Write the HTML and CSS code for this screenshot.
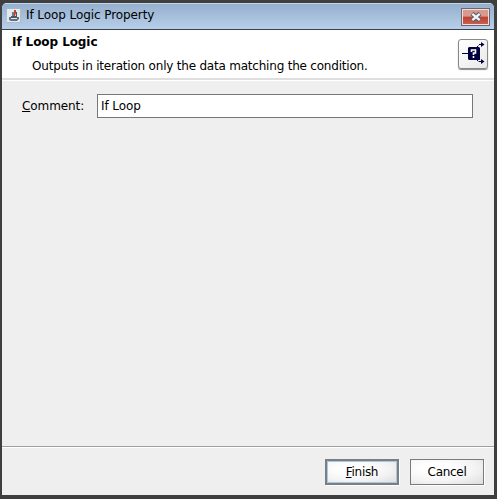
FILE: index.html
```
<!DOCTYPE html>
<html lang="en">

<head>
    <meta charset="UTF-8">
    <meta name="viewport" content="width=device-width, initial-scale=1.0">
    <title>If Loop Logic Property</title>
    <link rel="stylesheet" href="styles.css">
</head>

<body>
    <div class="window">
        <div class="titlebar">
            <svg class="app-icon" width="14" height="14" viewBox="0 0 14 14">
                <rect x="0" y="0" width="14" height="14" fill="#e6e8ea"/>
                <path d="M0 13.5h14M13.5 0v14" stroke="#b4bac2" fill="none"/>
                <path d="M5 3h2v4H5z" fill="#6d7f92"/>
                <path d="M7 1h2v3l-1 3H7z" fill="#c8402f"/>
                <path d="M9 3h1v4H9zM4 7h6v2H4z" fill="#4a5764"/>
                <path d="M2 8h2v2h6V8h2v2l-2 2H4l-2-1z" fill="#5d7186"/>
            </svg>
            <span class="title">If Loop Logic Property</span>
            <button class="close" aria-label="Close">
                <svg width="14" height="12" viewBox="0 0 14 12">
                    <path d="M3 2.5l8 7M11 2.5l-8 7" stroke="#59606b" stroke-width="4.4"/>
                    <path d="M3.3 2.8l7.4 6.4M10.7 2.8l-7.4 6.4" stroke="#f4f4f4" stroke-width="2.4"/>
                </svg>
            </button>
        </div>
        <div class="header">
            <div class="header-text">
                <h1>If Loop Logic</h1>
                <p>Outputs in iteration only the data matching the condition.</p>
            </div>
            <div class="logic-icon">
                <svg width="28" height="28" viewBox="0 0 28 28" fill="none" stroke="#00003c">
                    <path d="M3 13.5h6"/>
                    <path d="M10 7h10l1 1v12H10l-1-1V8z" fill="#00003c" stroke="none"/>
                    <path d="M12.5 12v-2h4V13h-2v2M14.5 16v2" stroke="#fff" stroke-width="1.6"/>
                    <path d="M18 7l2-2M20 4.5h4M18 20l2 2M20 21.5h4" stroke-dasharray="2 .6"/>
                    <path d="M22 2l3.5 2.5L22 7zM22 19l3.5 2.5L22 24z" fill="#00003c" stroke="none"/>
                </svg>
            </div>
        </div>
        <div class="content">
            <label for="comment"><u>C</u>omment:</label>
            <input id="comment" type="text" value="If Loop">
        </div>
        <div class="footer">
            <button class="btn btn-default"><span><u>F</u>inish</span></button>
            <button class="btn"><span>Cancel</span></button>
        </div>
    </div>
</body>

</html>
```
FILE: styles.css
```
* {
    box-sizing: border-box;
    margin: 0;
    padding: 0;
}
body {
    height: 499px;
    padding: 3px 3px 4px 2px;
    background-color: #403f40;
    font-family: "DejaVu Sans", Verdana, sans-serif;
    font-size: 12px;
    letter-spacing: -0.08px;
    color: #000;
    overflow: hidden;
}
.window {
    height: 492px;
    display: flex;
    flex-direction: column;
    background-color: #efefef;
    border-radius: 5px 5px 0 0;
    overflow: hidden;
}

.titlebar {
    height: 27px;
    display: flex;
    align-items: center;
    padding: 0 4px 0 5px;
    background: linear-gradient(#95b0cd, #b7cfea);
    border-top: 1px solid #c3d6e8;
    border-bottom: 1px solid #3a4048;
}
.app-icon {
    margin-top: -2px;
}
.title {
    flex: 1;
    margin: -4px 0 0 5px;
}
.close {
    width: 29px;
    height: 18px;
    display: flex;
    align-items: center;
    justify-content: center;
    border: 1px solid #6c6670;
    box-shadow: inset 0 0 0 1px #f0dcd9;
    background: linear-gradient(#d99a8d 45%, #bd4030 50%, #cb6250);
}

.header {
    height: 50px;
    display: flex;
    justify-content: space-between;
    padding: 4px 6px 0 10px;
    background-color: #fff;
    border-bottom: 2px solid #dedede;
}
.header h1 {
    font-size: 12px;
    line-height: 16px;
}
.header p {
    margin: 8px 0 0 20px;
    line-height: 16px;
    letter-spacing: -0.21px;
}
.logic-icon {
    width: 30px;
    height: 30px;
    margin-top: 5px;
    border: 1px solid #888;
    border-radius: 3px;
    background: linear-gradient(135deg, #fff, #e8e8e8);
    box-shadow: 0 1px 1px #888;
}

.content {
    flex: 1;
    display: flex;
    align-items: flex-start;
    padding: 13px 21px 0 20px;
    border-top: 1px solid #fff;
}
.content label {
    width: 75px;
    line-height: 24px;
}
.content input {
    flex: 1;
    height: 24px;
    padding: 0 3px;
    border: 1px solid #777;
    font: inherit;
    letter-spacing: inherit;
    background-color: #fff;
}

.footer {
    height: 49px;
    display: flex;
    justify-content: flex-end;
    gap: 11px;
    padding: 12px 10px 0 0;
    border-top: 1px solid #a0a0a0;
    box-shadow: inset 0 1px #fff;
}
.btn {
    width: 74px;
    height: 26px;
    border: 1px solid #7a7a7a;
    font: inherit;
    letter-spacing: -0.3px;
    background: radial-gradient(ellipse at 35% 35%, #fff 20%, #f3f3f3 60%, #dcdcdc);
    box-shadow: 1px 1px #fff;
}
.btn-default {
    border: 2px solid #7b7f80;
    outline: 1px solid #a9c8e8;
    outline-offset: -3px;
}
```
